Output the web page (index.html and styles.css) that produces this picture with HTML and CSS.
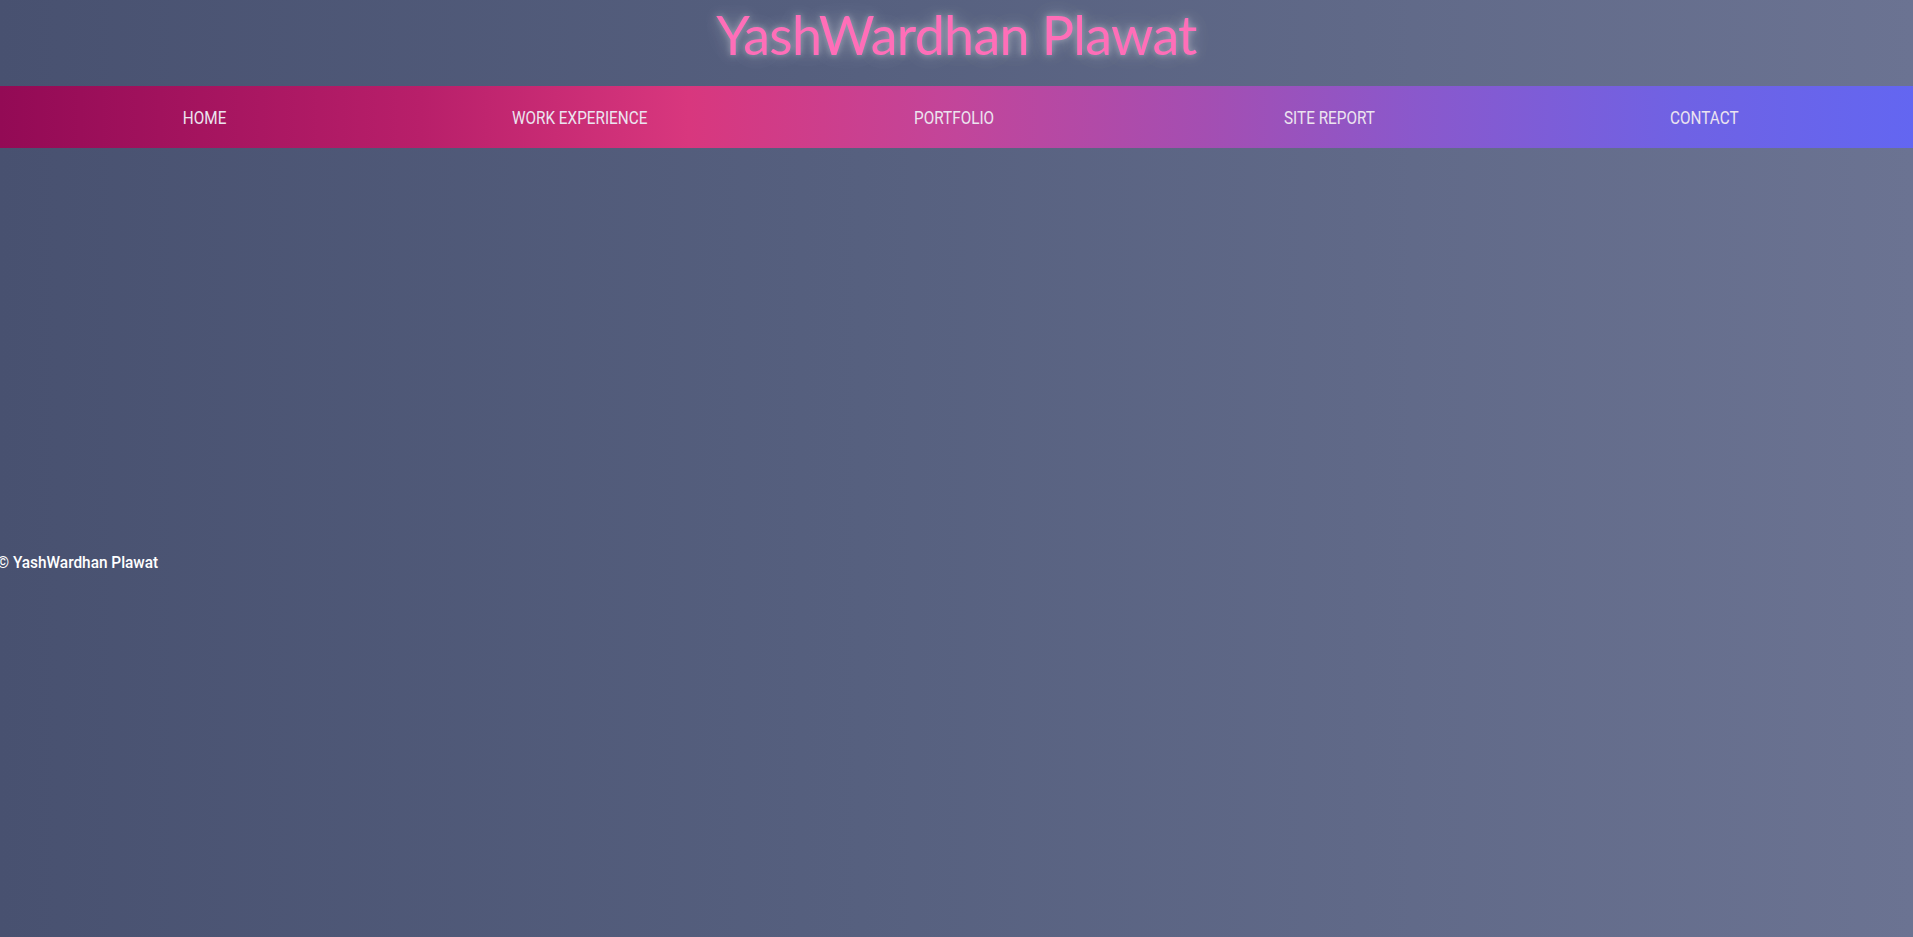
FILE: index.html
```html
<!DOCTYPE html>
<html lang="en">
<head>
<meta charset="utf-8">
<title>YashWardhan Plawat</title>
<link rel="stylesheet" href="styles.css">
</head>
<body>
<header class="site-header">
  <h1 class="site-title">YashWardhan Plawat</h1>
</header>
<nav class="main-nav">
  <ul class="nav-list">
    <li class="nav-item"><a class="nav-link" href="#"><span class="nav-text">HOME</span></a></li>
    <li class="nav-item"><a class="nav-link" href="#"><span class="nav-text">WORK EXPERIENCE</span></a></li>
    <li class="nav-item"><a class="nav-link" href="#"><span class="nav-text">PORTFOLIO</span></a></li>
    <li class="nav-item"><a class="nav-link" href="#"><span class="nav-text">SITE REPORT</span></a></li>
    <li class="nav-item"><a class="nav-link" href="#"><span class="nav-text">CONTACT</span></a></li>
  </ul>
</nav>
<main class="content"></main>
<footer class="site-footer">
  <span class="footer-text">© YashWardhan Plawat</span>
</footer>
</body>
</html>
```
FILE: styles.css
```css
html, body {
  margin: 0;
  padding: 0;
}
body {
  min-height: 937px;
  background: linear-gradient(90deg, #485170 0%, #56607f 45%, #6b7392 100%);
  font-family: Roboto, "Noto Sans", sans-serif;
  color: #ffffff;
}
.site-header {
  height: 86px;
  display: flex;
  align-items: flex-start;
  justify-content: center;
}
.site-title {
  margin: 0;
  padding-top: 8px;
  font-family: Lato, "Open Sans", sans-serif;
  font-weight: 400;
  font-size: 54px;
  line-height: 54px;
  letter-spacing: -0.8px;
  color: #ff6eb8;
  text-shadow: 0 0 6px rgba(255, 255, 255, 0.35), 0 0 16px rgba(255, 255, 255, 0.3), 0 0 28px rgba(255, 255, 255, 0.15);
}
.main-nav {
  height: 62px;
  background: linear-gradient(90deg, #930a55 0%, #b81f6a 22%, #d8377e 36%, #c2459a 50%, #a44eb2 63%, #8a58cc 74%, #6f62e4 88%, #6366f1 100%);
}
.nav-list {
  list-style: none;
  margin: 0;
  padding: 0 21px 0 17px;
  height: 100%;
  display: flex;
}
.nav-item {
  flex: 1;
  display: flex;
  align-items: center;
  justify-content: center;
}
.nav-link {
  color: #ece4f0;
  text-decoration: none;
  font-size: 18px;
  line-height: 20px;
}
.nav-text {
  display: inline-block;
  transform: scaleX(0.85);
  padding-top: 2px;
}
.content {
  height: 399px;
}
.site-footer {
  height: 30px;
  display: flex;
  align-items: center;
  margin-left: -3px;
}
.footer-text {
  display: inline-block;
  font-size: 17px;
  font-weight: 500;
  transform: scaleX(0.905);
  transform-origin: left center;
}
```
